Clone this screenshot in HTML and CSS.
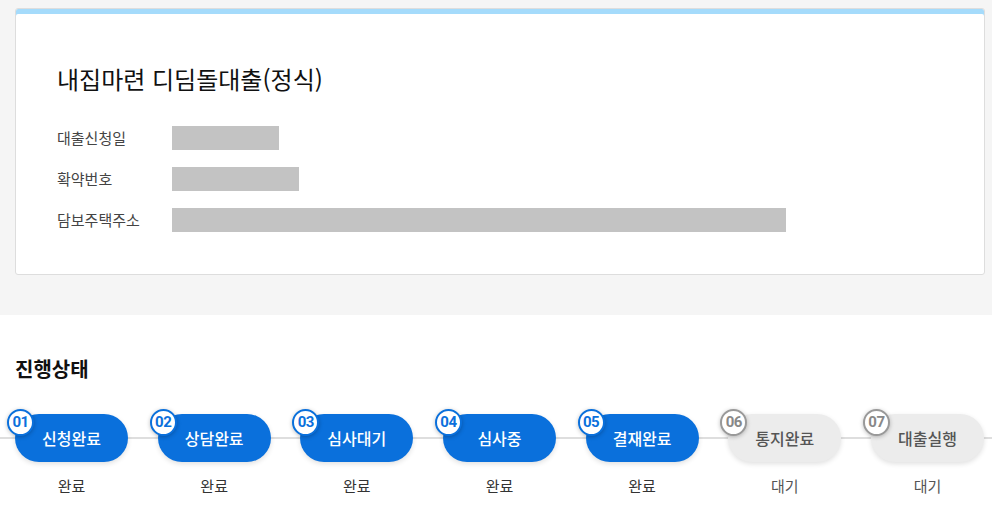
FILE: index.html
```html
<!DOCTYPE html>
<html lang="ko">
<head>
	<meta charset="UTF-8">
	<title>대출 진행상태</title>
	<link rel="stylesheet" href="styles.css">
</head>
<body>
	<section class="summary">
		<div class="card">
			<h1 class="card-title">내집마련 디딤돌대출(정식)</h1>
			<dl class="info">
				<dt>대출신청일</dt>
				<dd><span class="mask" style="width: 107px"></span></dd>
				<dt>확약번호</dt>
				<dd><span class="mask" style="width: 127px"></span></dd>
				<dt>담보주택주소</dt>
				<dd><span class="mask" style="width: 614px"></span></dd>
			</dl>
		</div>
	</section>

	<section class="status">
		<h2 class="status-title">진행상태</h2>
		<ol class="steps">
			<li class="step done">
				<div class="pill"><span class="num">01</span>신청완료</div>
				<p class="state">완료</p>
			</li>
			<li class="step done">
				<div class="pill"><span class="num">02</span>상담완료</div>
				<p class="state">완료</p>
			</li>
			<li class="step done">
				<div class="pill"><span class="num">03</span>심사대기</div>
				<p class="state">완료</p>
			</li>
			<li class="step done">
				<div class="pill"><span class="num">04</span>심사중</div>
				<p class="state">완료</p>
			</li>
			<li class="step done">
				<div class="pill"><span class="num">05</span>결재완료</div>
				<p class="state">완료</p>
			</li>
			<li class="step">
				<div class="pill"><span class="num">06</span>통지완료</div>
				<p class="state">대기</p>
			</li>
			<li class="step">
				<div class="pill"><span class="num">07</span>대출실행</div>
				<p class="state">대기</p>
			</li>
		</ol>
	</section>
</body>
</html>
```

FILE: styles.css
```css
* {
	box-sizing: border-box;
}
body {
	margin: 0;
	padding: 0;
	background-color: #fff;
	color: #333;
	font-family: 'Noto Sans CJK KR', 'Noto Sans', sans-serif;
}
.summary {
	background-color: #f5f5f5;
	padding: 8px 7px 40px 15px;
}
.card {
	background-color: #fff;
	border: 1px solid #ddd;
	border-radius: 3px;
	box-shadow: inset 0 5px 0 #a5dbfb;
	padding: 55px 41px 42px;
}
.card-title {
	margin: 0 0 32px;
	font-size: 24px;
	font-weight: normal;
	line-height: 30px;
	color: #111;
}
.info {
	display: grid;
	grid-template-columns: 115px 1fr;
	row-gap: 17px;
	margin: 0;
}
.info dt {
	font-size: 15px;
	line-height: 24px;
	color: #444;
}
.info dd {
	margin: 0;
	height: 24px;
}
.mask {
	display: block;
	height: 24px;
	background-color: #c3c3c3;
}
.status {
	padding: 43px 0 0;
}
.status-title {
	margin: 0 15px 34px;
	font-size: 20px;
	font-weight: bold;
	line-height: 22px;
	color: #111;
}
.steps {
	position: relative;
	display: flex;
	justify-content: space-between;
	list-style: none;
	margin: 0;
	padding: 0 8px 0 15px;
}
.steps::before {
	content: '';
	position: absolute;
	left: 0;
	right: 0;
	top: 23px;
	height: 2px;
	background-color: #dedede;
}
.step {
	position: relative;
	width: 113px;
	text-align: center;
}
.pill {
	position: relative;
	height: 48px;
	border-radius: 24px;
	background-color: #ececec;
	color: #555;
	font-size: 16px;
	font-weight: 500;
	line-height: 48px;
	box-shadow: 0 2px 5px rgba(0, 0, 0, .12);
}
.done .pill {
	background-color: #0a70dc;
	color: #fff;
}
.num {
	position: absolute;
	left: -8px;
	top: -5px;
	width: 27px;
	height: 27px;
	border: 2px solid #999;
	border-radius: 50%;
	background-color: #fff;
	color: #888;
	font-family: Roboto, 'Noto Sans', sans-serif;
	font-size: 15px;
	font-weight: bold;
	line-height: 23px;
	letter-spacing: -.5px;
	box-shadow: 0 1px 4px rgba(0, 0, 0, .25);
}
.done .num {
	border-color: #0a70dc;
	color: #0a70dc;
}
.state {
	margin: 14px 0 0;
	font-size: 15px;
	line-height: 20px;
	color: #333;
}
.step:not(.done) .state {
	color: #555;
}
```
